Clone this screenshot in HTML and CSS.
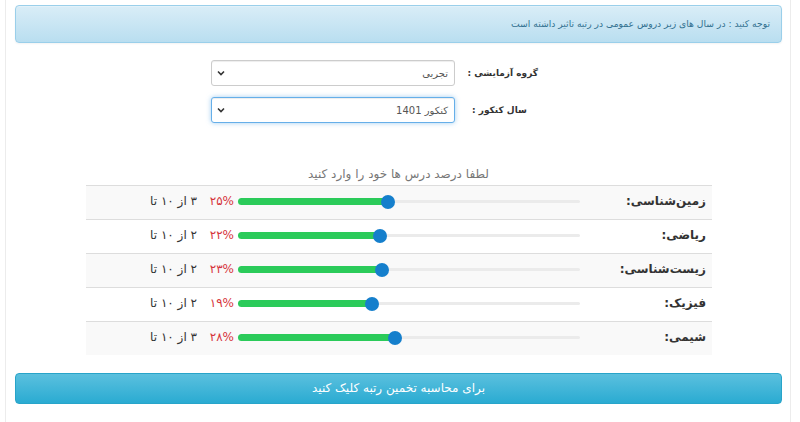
FILE: index.html
```html
<!DOCTYPE html>
<html lang="fa" dir="rtl">
<head>
<meta charset="utf-8">
<title>تخمین رتبه</title>
<link rel="stylesheet" href="styles.css">
</head>
<body>
<div class="page">
  <div class="alert">توجه کنید : در سال های زیر دروس عمومی در رتبه تاثیر داشته است</div>

  <div class="form">
    <div class="form-row">
      <div class="form-label">گروه آزمایشی :</div>
      <div class="select">
        <span class="select-text">تجربی</span>
        <svg class="chev" width="8" height="6" viewBox="0 0 8 6"><path d="M1 1.5 L4 4.5 L7 1.5" fill="none" stroke="#333" stroke-width="1.6"/></svg>
      </div>
    </div>
    <div class="form-row">
      <div class="form-label">سال کنکور :</div>
      <div class="select select-focus">
        <span class="select-text">کنکور 1401</span>
        <svg class="chev" width="8" height="6" viewBox="0 0 8 6"><path d="M1 1.5 L4 4.5 L7 1.5" fill="none" stroke="#333" stroke-width="1.6"/></svg>
      </div>
    </div>
  </div>

  <div class="hint">لطفا درصد درس ها خود را وارد کنید</div>

  <div class="table">
    <div class="row">
      <div class="cell-label">زمین‌شناسی:</div>
      <div class="cell-slider"><div class="track"><div class="fill" style="width:43.75%"></div><div class="thumb" style="left:43.75%"></div></div></div>
      <div class="cell-pct">۲۵%</div>
      <div class="cell-count">۳ از ۱۰ تا</div>
    </div>
    <div class="row">
      <div class="cell-label">ریاضی:</div>
      <div class="cell-slider"><div class="track"><div class="fill" style="width:41.5%"></div><div class="thumb" style="left:41.5%"></div></div></div>
      <div class="cell-pct">۲۲%</div>
      <div class="cell-count">۲ از ۱۰ تا</div>
    </div>
    <div class="row">
      <div class="cell-label">زیست‌شناسی:</div>
      <div class="cell-slider"><div class="track"><div class="fill" style="width:42.25%"></div><div class="thumb" style="left:42.25%"></div></div></div>
      <div class="cell-pct">۲۳%</div>
      <div class="cell-count">۲ از ۱۰ تا</div>
    </div>
    <div class="row">
      <div class="cell-label">فیزیک:</div>
      <div class="cell-slider"><div class="track"><div class="fill" style="width:39.25%"></div><div class="thumb" style="left:39.25%"></div></div></div>
      <div class="cell-pct">۱۹%</div>
      <div class="cell-count">۲ از ۱۰ تا</div>
    </div>
    <div class="row">
      <div class="cell-label">شیمی:</div>
      <div class="cell-slider"><div class="track"><div class="fill" style="width:46%"></div><div class="thumb" style="left:46%"></div></div></div>
      <div class="cell-pct">۲۸%</div>
      <div class="cell-count">۳ از ۱۰ تا</div>
    </div>
  </div>

  <div class="btn">برای محاسبه تخمین رتبه کلیک کنید</div>
</div>
</body>
</html>
```

FILE: styles.css
```css
html, body {
  margin: 0;
  padding: 0;
  background: #fff;
}
body {
  font-family: "DejaVu Sans", "Liberation Sans", sans-serif;
  color: #333;
  direction: rtl;
}
.page {
  margin: 0 9px 0 5px;
  box-sizing: border-box;
  border-left: 1px solid #ececec;
  border-right: 1px solid #ececec;
  padding: 5px 8px 20px 9px;
  min-height: 422px;
}
.alert {
  height: 38px;
  box-sizing: border-box;
  border: 1px solid #9acfea;
  border-radius: 4px;
  background: linear-gradient(to bottom, #d9edf7 0%, #b9def0 100%);
  box-shadow: inset 0 1px 0 rgba(255,255,255,.25), 0 1px 2px rgba(0,0,0,.05);
  color: #31708f;
  font-size: 9.2px;
  line-height: 36px;
  padding: 0 11px 0 11px;
  white-space: nowrap;
}
.form {
  margin-top: 17px;
  display: flex;
  flex-direction: column;
  gap: 11px;
  padding-right: 244px;
}
.form-row {
  display: flex;
  align-items: center;
}
.form-label {
  width: 66px;
  flex: none;
  text-align: left;
  white-space: nowrap;
  font-size: 9px;
  font-weight: bold;
  color: #333;
  padding-left: 2px;
}
.select {
  margin-right: 15px;
  width: 244px;
  height: 26px;
  box-sizing: border-box;
  border: 1px solid #ccc;
  border-radius: 3px;
  box-shadow: inset 0 1px 1px rgba(0,0,0,.075);
  display: flex;
  align-items: center;
  justify-content: space-between;
  padding: 0 6px 0 5px;
  background: #fff;
}
.select-focus {
  border-color: #66afe9;
  box-shadow: inset 0 1px 1px rgba(0,0,0,.075), 0 0 5px rgba(102,175,233,.6);
}
.select-text {
  font-size: 10px;
  color: #555;
}
.chev {
  display: block;
}
.hint {
  margin-top: 41px;
  height: 20px;
  line-height: 20px;
  text-align: center;
  font-size: 12px;
  color: #777;
}
.table {
  margin: 1px 70px 0 71px;
}
.row {
  display: grid;
  grid-template-columns: 132px 342px 38px 1fr;
  height: 34px;
  box-sizing: border-box;
  border-top: 1px solid #ddd;
  align-items: center;
}
.row:nth-child(odd) {
  background: #f9f9f9;
}
.cell-label {
  padding-right: 6px;
  font-size: 12px;
  font-weight: bold;
  color: #333;
  margin-top: -3px;
}
.cell-slider {
  direction: ltr;
  height: 100%;
  display: flex;
  align-items: center;
}
.track {
  position: relative;
  width: 100%;
  height: 3px;
  background: #ebebeb;
  border-radius: 2px;
  margin-top: -3px;
}
.fill {
  position: absolute;
  left: 0;
  top: -2px;
  height: 7px;
  background: #2bcb5a;
  border-radius: 4px;
}
.thumb {
  position: absolute;
  top: -5px;
  width: 14px;
  height: 14px;
  margin-left: -7px;
  border-radius: 50%;
  background: #157fcc;
}
.cell-pct {
  padding-right: 4px;
  font-size: 12px;
  color: #d6343c;
  margin-top: -3px;
}
.cell-count {
  padding-right: 3px;
  font-size: 12px;
  color: #333;
  margin-top: -3px;
}
.btn {
  margin-top: 18px;
  height: 31px;
  box-sizing: border-box;
  border: 1px solid #28a4c9;
  border-radius: 4px;
  background: linear-gradient(to bottom, #5bc0de 0%, #2aabd2 100%);
  color: #fff;
  text-align: center;
  font-size: 12px;
  line-height: 29px;
}
```
